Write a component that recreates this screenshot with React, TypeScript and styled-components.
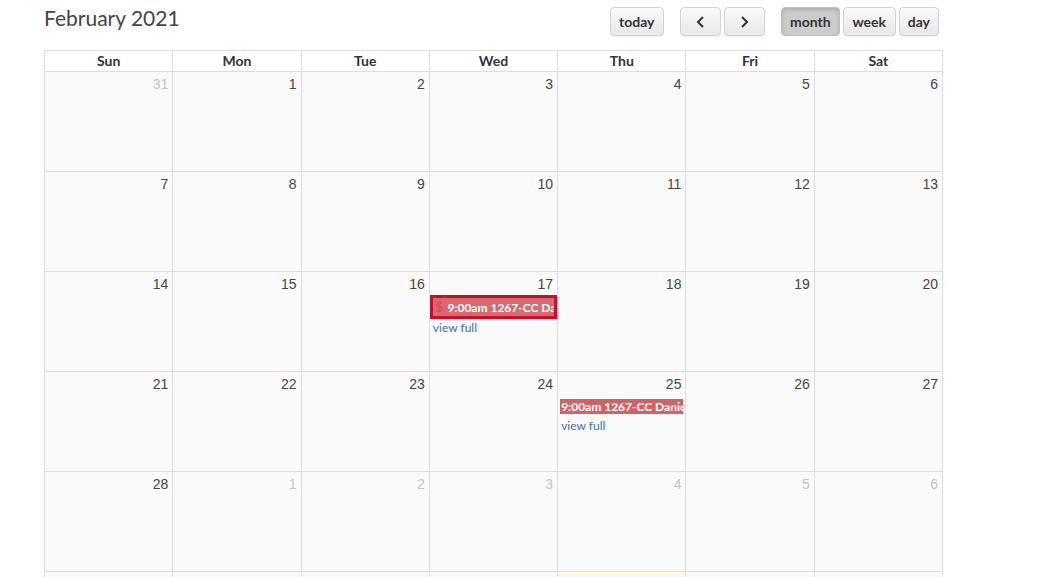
import styled, { createGlobalStyle, css } from 'styled-components';

const GlobalStyle = createGlobalStyle`
  html, body {
    margin: 0;
    padding: 0;
    background: #ffffff;
    font-family: Lato, "Open Sans", sans-serif;
  }
`;

const Page = styled.div`
  padding: 0 0 0 44px;
  width: 899px;
`;

const Toolbar = styled.div`
  display: flex;
  align-items: flex-start;
  height: 50px;
`;

const Title = styled.h2`
  margin: 4px 0 0 0;
  font-size: 21px;
  font-weight: 400;
  line-height: 28px;
  color: #444;
  flex: 1;
`;

const ButtonGroup = styled.div<{ $gap?: number }>`
  display: flex;
  gap: ${(p) => p.$gap ?? 4}px;
  margin: 7px 0 0 16px;
`;

const Button = styled.button<{ $active?: boolean; $w?: number }>`
  height: 29px;
  min-width: ${(p) => p.$w ?? 0}px;
  padding: 0 8px;
  font-family: Lato, sans-serif;
  font-weight: 700;
  font-size: 14px;
  color: #333;
  border: 1px solid #d2d2d2;
  border-radius: 4px;
  background: linear-gradient(#fafafa, #e8e8e8);
  box-shadow: 0 1px 1px rgba(0, 0, 0, 0.05);
  display: flex;
  align-items: center;
  justify-content: center;
  ${(p) =>
    p.$active &&
    css`
      background: #cccccc;
      border-color: #bdbdbd;
      box-shadow: inset 0 2px 4px rgba(0, 0, 0, 0.15);
    `}
`;

const Grid = styled.div`
  display: grid;
  grid-template-columns: repeat(7, 1fr);
  border-top: 1px solid #ddd;
  border-left: 1px solid #ddd;
`;

const HeadCell = styled.div`
  height: 20px;
  line-height: 20px;
  text-align: center;
  font-weight: 700;
  font-size: 14px;
  color: #333;
  border-right: 1px solid #ddd;
  border-bottom: 1px solid #ddd;
  background: #fff;
`;

const DayCell = styled.div<{ $today?: boolean }>`
  height: 99px;
  border-right: 1px solid #ddd;
  border-bottom: 1px solid #ddd;
  background: ${(p) => (p.$today ? '#fcf8e3' : '#fafafa')};
  display: flex;
  flex-direction: column;
  min-width: 0;
`;

const DayNumber = styled.div<{ $other?: boolean }>`
  text-align: right;
  padding: 3px 4px 0 0;
  height: 21px;
  font-family: "Liberation Sans", Arial, sans-serif;
  font-size: 14px;
  line-height: 18px;
  color: ${(p) => (p.$other ? '#c4c4c4' : '#444')};
`;

const EventBox = styled.div<{ $selected?: boolean }>`
  margin: ${(p) => (p.$selected ? '-1px 0 0 0' : '3px 2px 0 2px')};
  border: ${(p) => (p.$selected ? '3px solid #c8102e' : 'none')};
  background: ${(p) => (p.$selected ? '#d46b70' : '#cd6467')};
  color: #fff;
  font-weight: 700;
  font-size: 12px;
  height: ${(p) => (p.$selected ? '18px' : '15px')};
  line-height: ${(p) => (p.$selected ? '18px' : '15px')};
  white-space: nowrap;
  overflow: hidden;
  padding: ${(p) => (p.$selected ? '0 1px 0 3px' : '0 1px')};
`;

const Dollar = styled.span`
  color: #e8474f;
  margin-right: 4px;
  font-size: 13px;
  font-weight: 700;
`;

const ViewFull = styled.a<{ $tight?: boolean }>`
  font-size: 12px;
  color: #3f6fa6;
  line-height: 14px;
  padding: ${(p) => (p.$tight ? '2px' : '5px')} 0 0 3px;
  text-decoration: none;
`;

type Ev = { text: string; selected?: boolean };

type Day = { n: number; other?: boolean; today?: boolean; events?: Ev[] };

const days: Day[] = [];
days.push({ n: 31, other: true });
for (let i = 1; i <= 28; i++) {
  const d: Day = { n: i };
  if (i === 17) d.events = [{ text: '9:00am 1267-CC Daniel', selected: true }];
  if (i === 25) d.events = [{ text: '9:00am 1267-CC Daniel' }];
  days.push(d);
}
for (let i = 1; i <= 13; i++) {
  days.push({ n: i, other: true, today: i === 11 });
}

const headers = ['Sun', 'Mon', 'Tue', 'Wed', 'Thu', 'Fri', 'Sat'];

const Chevron = ({ dir }: { dir: 'left' | 'right' }) => (
  <svg width="9" height="12" viewBox="0 0 9 12">
    <path
      d={dir === 'left' ? 'M7 1 L2 6 L7 11' : 'M2 1 L7 6 L2 11'}
      fill="none"
      stroke="#333"
      strokeWidth="2"
    />
  </svg>
);

export default function App() {
  return (
    <>
      <GlobalStyle />
      <Page>
        <Toolbar>
          <Title>February 2021</Title>
          <ButtonGroup>
            <Button $w={54}>today</Button>
          </ButtonGroup>
          <ButtonGroup $gap={3}>
            <Button $w={41}>
              <Chevron dir="left" />
            </Button>
            <Button $w={41}>
              <Chevron dir="right" />
            </Button>
          </ButtonGroup>
          <ButtonGroup $gap={3} style={{ marginRight: 4 }}>
            <Button $active $w={59}>month</Button>
            <Button $w={53}>week</Button>
            <Button $w={40}>day</Button>
          </ButtonGroup>
        </Toolbar>
        <Grid>
          {headers.map((h) => (
            <HeadCell key={h}>{h}</HeadCell>
          ))}
          {days.map((d, i) => (
            <DayCell key={i} $today={d.today}>
              <DayNumber $other={d.other}>{d.n}</DayNumber>
              {d.events?.map((e, j) => (
                <EventBox key={j} $selected={e.selected}>
                  {e.selected && <Dollar>$</Dollar>}
                  {e.text}
                </EventBox>
              ))}
              {d.events && (
                <ViewFull href="#" $tight={d.events.some((e) => e.selected)}>
                  view full
                </ViewFull>
              )}
            </DayCell>
          ))}
        </Grid>
      </Page>
    </>
  );
}
